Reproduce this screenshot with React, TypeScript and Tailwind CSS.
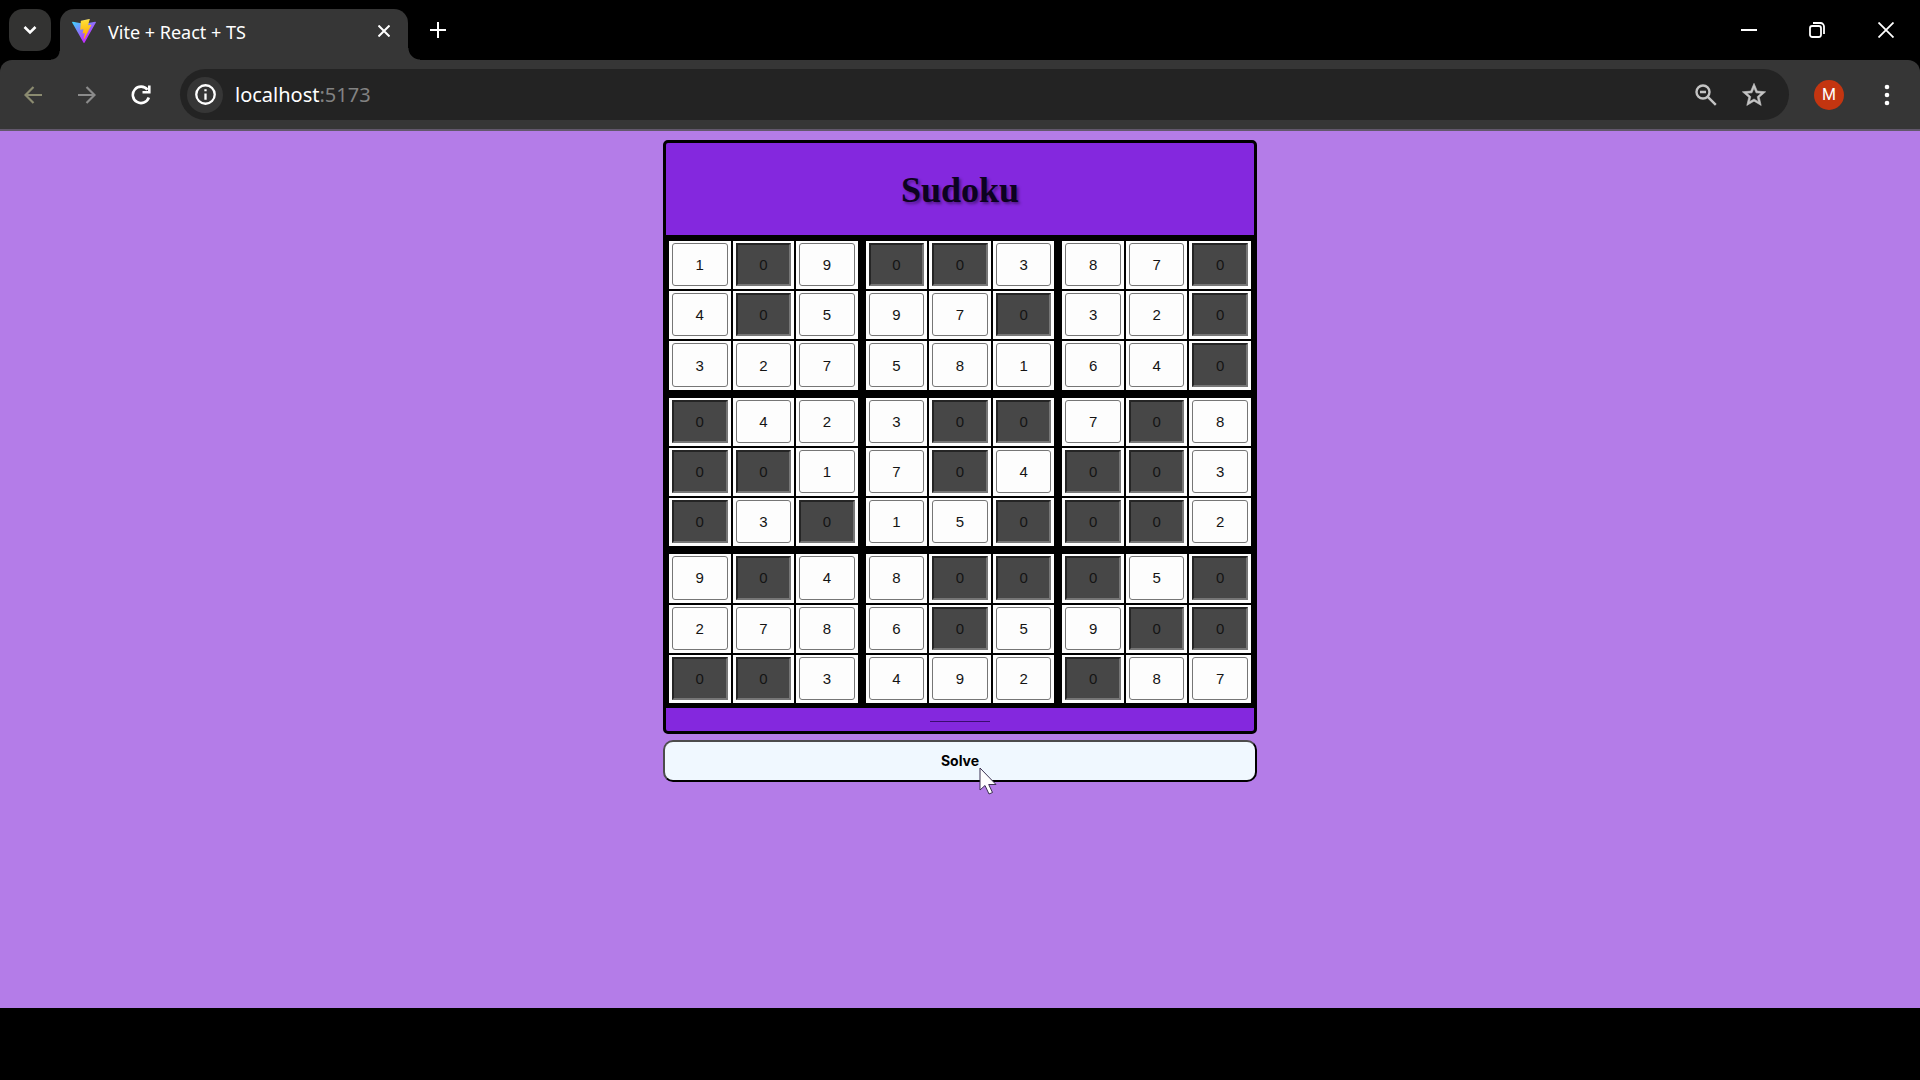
import React from "react";

const PUZZLE = [
  "109003870",
  "405970320",
  "327581640",
  "042300708",
  "001704003",
  "030150002",
  "904800050",
  "278605900",
  "003492087",
];

function ViteLogo() {
  return (
    <svg viewBox="0 0 256 257" className="size-6 shrink-0" aria-hidden="true">
      <defs>
        <linearGradient id="vite-body" x1="-.8%" x2="57.6%" y1="7.7%" y2="78.4%">
          <stop offset="0%" stopColor="#41D1FF" />
          <stop offset="100%" stopColor="#BD34FE" />
        </linearGradient>
        <linearGradient id="vite-bolt" x1="43.4%" x2="50.3%" y1="2.2%" y2="89%">
          <stop offset="0%" stopColor="#FFEA83" />
          <stop offset="8.3%" stopColor="#FFDD35" />
          <stop offset="100%" stopColor="#FFA800" />
        </linearGradient>
      </defs>
      <path
        fill="url(#vite-body)"
        d="M255.153 37.938L134.897 252.976c-2.483 4.44-8.862 4.466-11.382.048L.875 37.958c-2.746-4.814 1.371-10.646 6.827-9.67l120.385 21.517a6.537 6.537 0 0 0 2.322-.004l117.867-21.483c5.438-.991 9.574 4.796 6.877 9.62Z"
      />
      <path
        fill="url(#vite-bolt)"
        d="M185.432.063L96.44 17.501a3.268 3.268 0 0 0-2.634 3.014l-5.474 92.456a3.268 3.268 0 0 0 3.997 3.378l24.777-5.718c2.318-.535 4.413 1.507 3.936 3.838l-7.361 36.047c-.495 2.426 1.782 4.5 4.151 3.78l15.304-4.649c2.372-.72 4.652 1.36 4.15 3.788l-11.698 56.621c-.732 3.542 3.979 5.473 5.943 2.437l1.313-2.028l72.516-144.72c1.215-2.423-.88-5.186-3.54-4.672l-25.505 4.922c-2.396.462-4.435-1.77-3.759-4.114l16.646-57.705c.677-2.35-1.37-4.583-3.769-4.113Z"
      />
    </svg>
  );
}

function IconButton({ label, className, children }: { label: string; className: string; children: React.ReactNode }) {
  return (
    <button type="button" aria-label={label} className={`flex shrink-0 items-center justify-center ${className}`}>
      {children}
    </button>
  );
}

function TabStrip() {
  return (
    <div className="flex h-[60px] items-start bg-black text-white">
      <IconButton label="Search tabs" className="mt-[9px] ml-[9px] size-[42px] rounded-[14px] bg-[#333332]">
        <svg viewBox="0 0 14 10" className="h-[10px] w-[14px]" fill="none" stroke="currentColor" strokeWidth="2.6">
          <path d="M1.5 2l5.5 5.5L12.500 2" />
        </svg>
      </IconButton>
      <div className="mt-[9px] flex h-[51px] items-end">
        <span className="size-[9px] bg-[radial-gradient(circle_at_0_0,#000_8px,#363636_9px)]" />
        <div className="flex h-full w-[348px] items-center rounded-t-[14px] bg-[#363636] pr-3 pb-2 pl-3">
          <ViteLogo />
          <span className="mt-[2px] ml-3 flex-1 font-['Noto_Sans'] text-[18px] leading-6">Vite + React + TS</span>
          <IconButton label="Close tab" className="size-6">
            <svg viewBox="0 0 12 12" className="size-3" stroke="currentColor" strokeWidth="2">
              <path d="M.5.5l11 11M11.500.5l-11 11" />
            </svg>
          </IconButton>
        </div>
        <span className="size-3 bg-[radial-gradient(circle_at_100%_0,#000_11px,#363636_12px)]" />
      </div>
      <IconButton label="New tab" className="mt-[14px] ml-[2px] size-8">
        <svg viewBox="0 0 16 16" className="size-4" stroke="currentColor" strokeWidth="2">
          <path d="M8 0v16M0 8h16" />
        </svg>
      </IconButton>
      <div className="ml-auto flex h-[59px]">
        <IconButton label="Minimize" className="w-[68px]">
          <svg viewBox="0 0 16 16" className="size-4" stroke="currentColor" strokeWidth="2">
            <path d="M0 8h16" />
          </svg>
        </IconButton>
        <IconButton label="Restore" className="w-[68px]">
          <svg viewBox="0 0 16 16" className="size-4" fill="none" stroke="currentColor" strokeWidth="1.800">
            <rect x="1" y="4" width="11" height="11" rx="2.200" />
            <path d="M4 1h7.500a3.500 3.500 0 0 1 3.500 3.500V12" />
          </svg>
        </IconButton>
        <IconButton label="Close window" className="w-[69px]">
          <svg viewBox="0 0 16 16" className="size-4" stroke="currentColor" strokeWidth="1.800">
            <path d="M.5.5l15 15M15.500.5l-15 15" />
          </svg>
        </IconButton>
      </div>
    </div>
  );
}

function Toolbar() {
  return (
    <div className="bg-black">
      <div className="flex h-[71px] items-center rounded-t-[12px] border-b-2 border-[#62586c] bg-[#363636] text-white">
        <IconButton label="Back" className="ml-[13px] size-10 text-[#8b8b70]">
          <svg viewBox="0 0 18 18" className="size-[18px]" fill="none" stroke="currentColor" strokeWidth="2.2">
            <path d="M18 9H1.500M9.500 1L1.500 9l8 8" />
          </svg>
        </IconButton>
        <IconButton label="Forward" className="ml-[14px] size-10 text-[#8b8b8b]">
          <svg viewBox="0 0 18 18" className="size-[18px]" fill="none" stroke="currentColor" strokeWidth="2.2">
            <path d="M0 9h16.500M8.500 1l8 8-8 8" />
          </svg>
        </IconButton>
        <IconButton label="Reload" className="ml-[14px] size-10">
          <svg viewBox="0 0 20 20" className="size-5" fill="none" stroke="currentColor" strokeWidth="2.600">
            <path d="M17.800 12.500A8.200 8.200 0 1 1 16.500 4.800" />
            <path d="M11.500 7.200h6.800V.5" />
          </svg>
        </IconButton>
        <div className="ml-[19px] flex h-[51px] flex-1 items-center rounded-full bg-[#232323] pr-[15px] pl-[7px]">
          <IconButton label="View site information" className="size-9 rounded-full bg-[#363636]">
            <svg viewBox="0 0 20 20" className="size-[21px]" fill="none" stroke="currentColor" strokeWidth="2.2">
              <circle cx="10" cy="10" r="8.800" />
              <path d="M10 9v6M10 5v2" />
            </svg>
          </IconButton>
          <a href="http://localhost:5173" className="ml-3 flex-1 font-['Noto_Sans'] text-[20px] leading-7">
            localhost<span className="text-[#828282]">:5173</span>
          </a>
          <IconButton label="Zoom" className="size-10 text-[#c4c4c4]">
            <svg viewBox="0 0 22 22" className="size-[22px]" fill="none" stroke="currentColor" strokeWidth="2.400">
              <circle cx="8" cy="8" r="6.500" />
              <path d="M12.800 12.800l8 8M5 8h6" />
            </svg>
          </IconButton>
          <IconButton label="Bookmark this tab" className="ml-2 size-10 text-[#c4c4c4]">
            <svg viewBox="0 0 24 24" className="size-[28px]" fill="currentColor" stroke="currentColor" strokeWidth=".5">
              <path d="M22 9.240l-7.190-.620L12 2 9.190 8.630 2 9.240l5.460 4.730L5.820 21 12 17.270 18.180 21l-1.630-7.030L22 9.240zM12 15.400l-3.760 2.270 1-4.280-3.320-2.880 4.380-.380L12 6.100l1.710 4.040 4.380.380-3.320 2.880 1 4.280L12 15.400z" />
            </svg>
          </IconButton>
        </div>
        <IconButton
          label="Profile"
          className="ml-[25px] size-[30px] rounded-full bg-[#c43510] font-['Roboto'] text-base text-white"
        >
          M
        </IconButton>
        <IconButton label="Menu" className="mr-[13px] ml-[23px] size-10">
          <svg viewBox="0 0 6 22" className="h-[22px] w-[6px]" fill="currentColor">
            <circle cx="3" cy="3" r="2.300" />
            <circle cx="3" cy="11" r="2.300" />
            <circle cx="3" cy="19" r="2.300" />
          </svg>
        </IconButton>
      </div>
    </div>
  );
}

function Cell({ row, col }: { row: number; col: number }) {
  const value = PUZZLE[row][col];
  const look =
    value === "0"
      ? "border-2 border-t-[#252525] border-l-[#252525] border-r-[#767676] border-b-[#767676] bg-[#474747]"
      : "rounded-[3px] border border-[#767676] bg-[#fdfdfd]";
  return (
    <div className="flex min-h-0 min-w-0 bg-[#fdfdfd] px-[3px] pt-[2px] pb-[3px]">
      <input
        aria-label={`Row ${row + 1}, column ${col + 1}`}
        defaultValue={value}
        className={`min-w-0 flex-1 pt-px text-center font-['Liberation_Sans'] text-[15px] leading-5 text-[#141414] ${look}`}
      />
    </div>
  );
}

function Board() {
  return (
    <div className="grid flex-1 grid-cols-3 grid-rows-3 gap-2 bg-black px-[3px] pt-[6px] pb-[5px]">
      {[0, 1, 2, 3, 4, 5, 6, 7, 8].map((block) => (
        <div key={block} className="grid min-h-0 grid-cols-3 grid-rows-3 gap-[2px]">
          {[0, 1, 2, 3, 4, 5, 6, 7, 8].map((i) => (
            <Cell key={i} row={Math.floor(block / 3) * 3 + Math.floor(i / 3)} col={(block % 3) * 3 + (i % 3)} />
          ))}
        </div>
      ))}
    </div>
  );
}

function Cursor() {
  return (
    <svg viewBox="0 0 18 28" className="pointer-events-none absolute top-[-2px] left-0 h-7 w-[18px]" aria-hidden="true">
      <path d="M1 1v22l5-4.500 4 8.500 3.500-1.500-3.800-8H17z" fill="#fff" stroke="#3a3050" strokeWidth="1" />
    </svg>
  );
}

export default function App() {
  return (
    <div className="flex h-screen flex-col bg-black">
      <TabStrip />
      <Toolbar />
      <main className="mb-[72px] flex flex-1 flex-col items-center bg-[#b47ce8] pt-[9px]">
        <section className="flex aspect-square h-[55vh] flex-col rounded-[5px] border-3 border-black bg-[#8428de]">
          <h1 className="flex h-[92px] items-center justify-center pt-[2px] font-['Liberation_Serif'] text-[36px] leading-10 font-bold text-[#0c0220] text-shadow-[2px_2px_3px_#0006]">
            Sudoku
          </h1>
          <Board />
          <div className="flex h-[23px] items-center justify-center pt-[3px]">
            <hr className="w-[60px] border-[#3a0c70]" />
          </div>
        </section>
        <button
          type="button"
          className="mt-[6px] h-[42px] w-[55vh] rounded-[10px] border-2 border-t-[#4c4c4c] border-r-black border-b-black border-l-[#4c4c4c] bg-[#f0f8ff] font-['Inter'] text-[14px] leading-5 font-bold text-black"
        >
          <span className="relative">
            Solve
            <span className="absolute top-full left-full">
              <Cursor />
            </span>
          </span>
        </button>
      </main>
    </div>
  );
}
